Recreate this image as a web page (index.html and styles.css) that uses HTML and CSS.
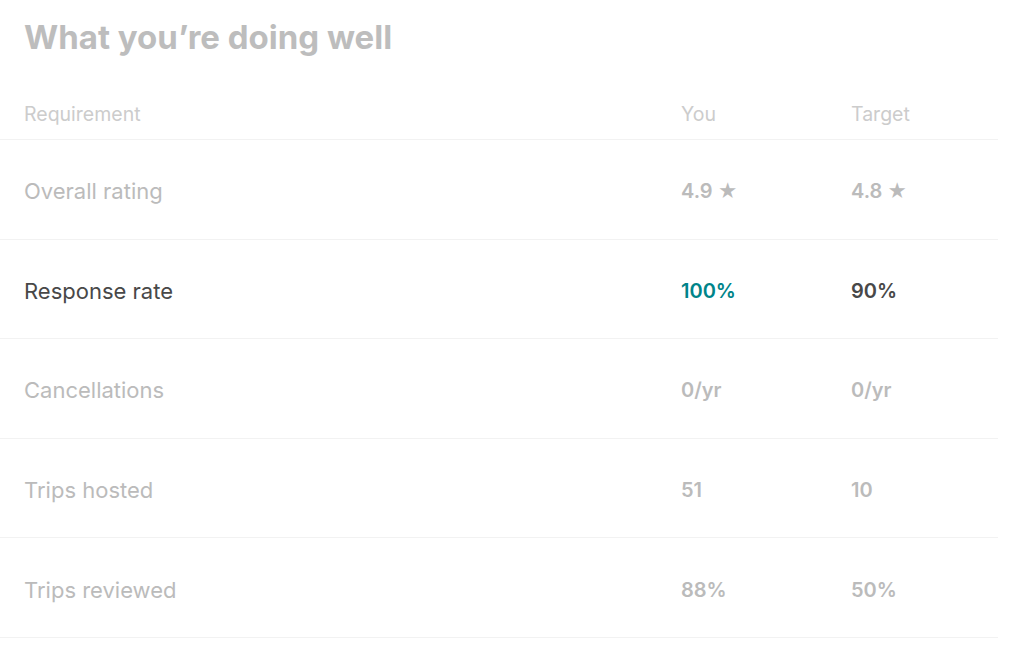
FILE: index.html
```html
<!DOCTYPE html>
<html>
<head>
<meta charset="utf-8">
<link rel="stylesheet" href="styles.css">
</head>
<body>
<main class="panel">
  <h1 class="title">What you’re doing well</h1>
  <div class="table">
    <div class="row head">
      <div class="c-label">Requirement</div>
      <div class="c-you">You</div>
      <div class="c-target">Target</div>
    </div>
    <div class="row dim">
      <div class="c-label">Overall rating</div>
      <div class="c-you val">4.9 <span class="star">★</span></div>
      <div class="c-target val">4.8 <span class="star">★</span></div>
    </div>
    <div class="row active">
      <div class="c-label">Response rate</div>
      <div class="c-you val good">100%</div>
      <div class="c-target val">90%</div>
    </div>
    <div class="row dim">
      <div class="c-label">Cancellations</div>
      <div class="c-you val">0/yr</div>
      <div class="c-target val">0/yr</div>
    </div>
    <div class="row dim">
      <div class="c-label">Trips hosted</div>
      <div class="c-you val">51</div>
      <div class="c-target val">10</div>
    </div>
    <div class="row dim">
      <div class="c-label">Trips reviewed</div>
      <div class="c-you val">88%</div>
      <div class="c-target val">50%</div>
    </div>
  </div>
</main>
</body>
</html>
```

FILE: styles.css
```css
html, body {
  margin: 0;
  padding: 0;
  background: #ffffff;
}
body {
  font-family: "Inter", "Liberation Sans", sans-serif;
}
.panel {
  width: 998px;
}
.title {
  margin: 0;
  padding: 17px 0 0 24px;
  height: 62px;
  box-sizing: border-box;
  font-size: 33px;
  line-height: 40px;
  font-weight: 700;
  color: #bdbdbd;
}
.table {
  display: flex;
  flex-direction: column;
}
.row {
  display: grid;
  grid-template-columns: 657px 170px 1fr;
  align-items: center;
  padding-left: 24px;
  padding-top: 4px;
  border-bottom: 1px solid #f2f2f2;
  height: 99.6px;
  box-sizing: border-box;
  font-size: 22px;
}
.row.head {
  height: 78px;
  padding-top: 26px;
  font-size: 19.5px;
  color: #cccccc;
}
.val {
  font-size: 20px;
  font-weight: 600;
}
.row.dim {
  color: #bbbbbb;
}
.row.active {
  color: #484848;
}
.good {
  color: #008489;
}
.star {
  font-size: 19px;
}
```
